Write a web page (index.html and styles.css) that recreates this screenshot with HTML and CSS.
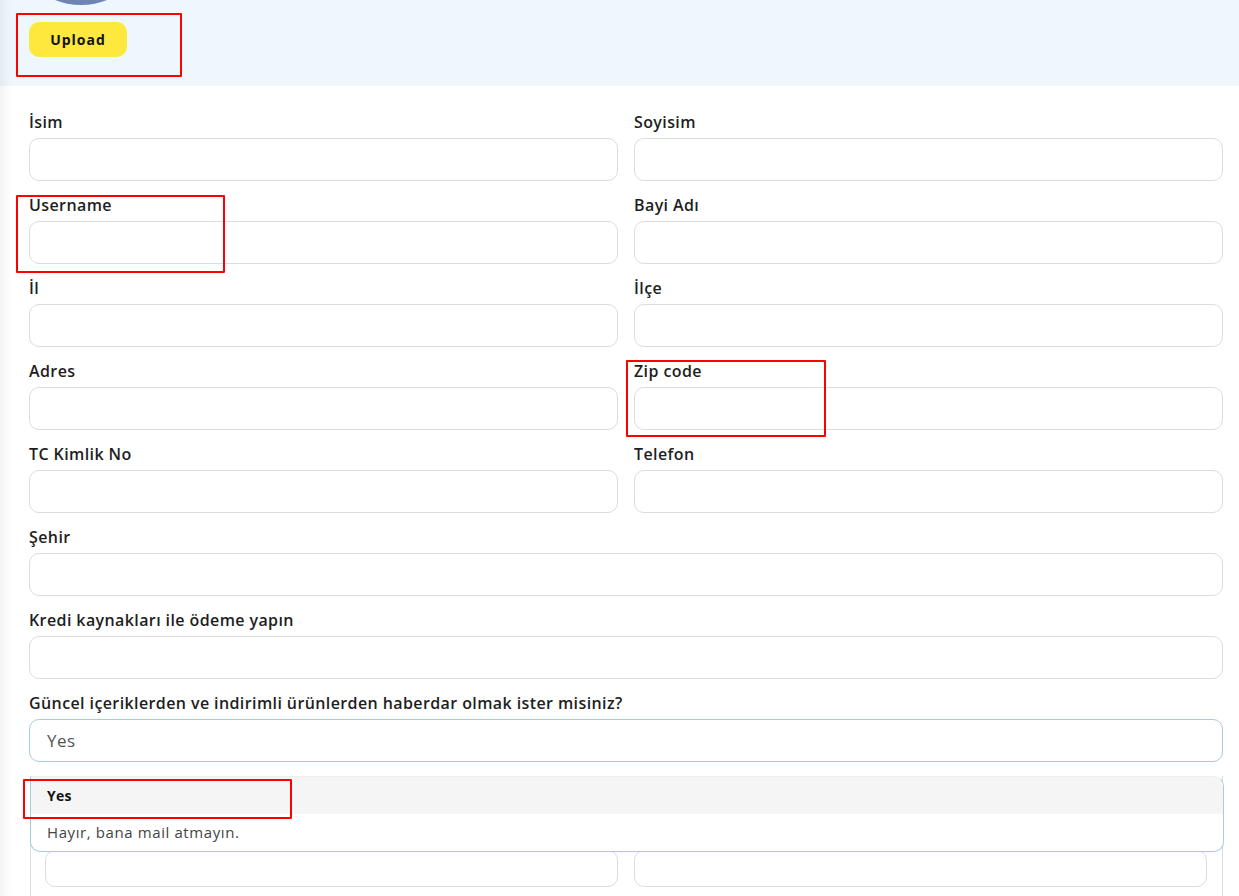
FILE: index.html
```html
<!DOCTYPE html>
<html lang="tr">
<head>
    <meta charset="UTF-8">
    <meta name="viewport" content="width=device-width, initial-scale=1.0">
    <title>Profil</title>
    <link rel="stylesheet" href="styles.css">
</head>
<body>
    <div class="page">
        <div class="profile-head">
            <div class="avatar"></div>
            <button class="upload-btn" type="button">Upload</button>
        </div>

        <form class="profile-form">
            <div class="field">
                <label>İsim</label>
                <input type="text">
            </div>
            <div class="field">
                <label>Soyisim</label>
                <input type="text">
            </div>
            <div class="field">
                <label>Username</label>
                <input type="text">
            </div>
            <div class="field">
                <label>Bayi Adı</label>
                <input type="text">
            </div>
            <div class="field">
                <label>İl</label>
                <input type="text">
            </div>
            <div class="field">
                <label>İlçe</label>
                <input type="text">
            </div>
            <div class="field">
                <label>Adres</label>
                <input type="text">
            </div>
            <div class="field">
                <label>Zip code</label>
                <input type="text">
            </div>
            <div class="field">
                <label>TC Kimlik No</label>
                <input type="text">
            </div>
            <div class="field">
                <label>Telefon</label>
                <input type="text">
            </div>
            <div class="field wide">
                <label>Şehir</label>
                <input type="text">
            </div>
            <div class="field wide">
                <label>Kredi kaynakları ile ödeme yapın</label>
                <input type="text">
            </div>
            <div class="field wide select-field">
                <label>Güncel içeriklerden ve indirimli ürünlerden haberdar olmak ister misiniz?</label>
                <div class="select-box">Yes</div>
                <ul class="dropdown">
                    <li class="selected">Yes</li>
                    <li>Hayır, bana mail atmayın.</li>
                </ul>
            </div>
            <div class="wide sub-section">
                <div class="sub-row">
                    <input type="text">
                    <input type="text">
                </div>
            </div>
        </form>

        <div class="mark mark-upload"></div>
        <div class="mark mark-username"></div>
        <div class="mark mark-zip"></div>
        <div class="mark mark-yes"></div>
    </div>
</body>
</html>
```

FILE: styles.css
```css
body {
    margin: 0;
    font-family: 'Open Sans', 'Lato', sans-serif;
    color: #1c1c1c;
    background: #fff;
    overflow: hidden;
}

.page {
    position: relative;
    height: 896px;
    overflow: hidden;
    box-shadow: inset 14px 0 12px -10px rgba(0, 0, 0, 0.06);
}

.profile-head {
    background: #eef6fe;
    height: 86px;
    padding-left: 29px;
    overflow: hidden;
    box-shadow: inset 14px 0 12px -10px rgba(0, 0, 0, 0.06);
}

.avatar {
    width: 140px;
    height: 140px;
    border-radius: 50%;
    background: #7083b5;
    margin: -135px 0 0 -18px;
}

.upload-btn {
    display: block;
    margin-top: 17px;
    width: 98px;
    height: 35px;
    border: 0;
    border-radius: 10px;
    background: #ffe83d;
    color: #111;
    font-family: inherit;
    font-size: 14px;
    font-weight: 700;
    letter-spacing: 1px;
    cursor: pointer;
}

.profile-form {
    display: grid;
    grid-template-columns: 1fr 1fr;
    column-gap: 16px;
    row-gap: 14px;
    padding: 26px 16px 0 29px;
}

.field label {
    display: block;
    font-size: 16px;
    font-weight: 600;
    line-height: 20px;
    letter-spacing: 0.4px;
    margin-bottom: 6px;
    color: #1e1e1e;
}

.field input,
.sub-row input {
    display: block;
    box-sizing: border-box;
    width: 100%;
    height: 43px;
    border: 1px solid #dcdcdc;
    border-radius: 10px;
    background: #fff;
    outline: none;
}

.wide {
    grid-column: 1 / -1;
}

.select-field {
    position: relative;
    z-index: 2;
}

.select-box {
    box-sizing: border-box;
    height: 43px;
    border: 1px solid #a3cfdc;
    border-radius: 10px;
    padding: 0 17px;
    line-height: 41px;
    font-size: 17px;
    letter-spacing: 0.5px;
    color: #555;
}

.dropdown {
    position: absolute;
    left: 1px;
    right: -1px;
    top: calc(100% + 14px);
    margin: 0;
    padding: 0;
    list-style: none;
    background: #fff;
    border: 1px solid #a3cfdc;
    border-top-color: #eee;
    border-radius: 0 10px 10px 10px;
    overflow: hidden;
}

.dropdown li {
    height: 37px;
    line-height: 37px;
    padding: 0 16px;
    font-size: 15px;
    letter-spacing: 0.6px;
    color: #444;
}

.dropdown li.selected {
    background: #f5f5f5;
    font-size: 14px;
    letter-spacing: 0.3px;
    font-weight: 700;
    color: #111;
}

.sub-section {
    margin-left: 1px;
    border-left: 1px solid #dcdcdc;
    border-right: 1px solid #dcdcdc;
    padding: 74px 15px 0 14px;
    height: 200px;
}

.sub-row {
    display: grid;
    grid-template-columns: 1fr 1fr;
    gap: 16px;
}

.sub-row input {
    height: 37px;
}

/* annotation boxes */
.mark {
    position: absolute;
    z-index: 10;
    border: 2px solid #ff0000;
    border-radius: 1px;
    pointer-events: none;
}

.mark-upload {
    left: 16px;
    top: 13px;
    width: 162px;
    height: 60px;
}

.mark-username {
    left: 16px;
    top: 195px;
    width: 205px;
    height: 74px;
}

.mark-zip {
    left: 626px;
    top: 360px;
    width: 196px;
    height: 73px;
}

.mark-yes {
    left: 23px;
    top: 779px;
    width: 265px;
    height: 36px;
}
```
